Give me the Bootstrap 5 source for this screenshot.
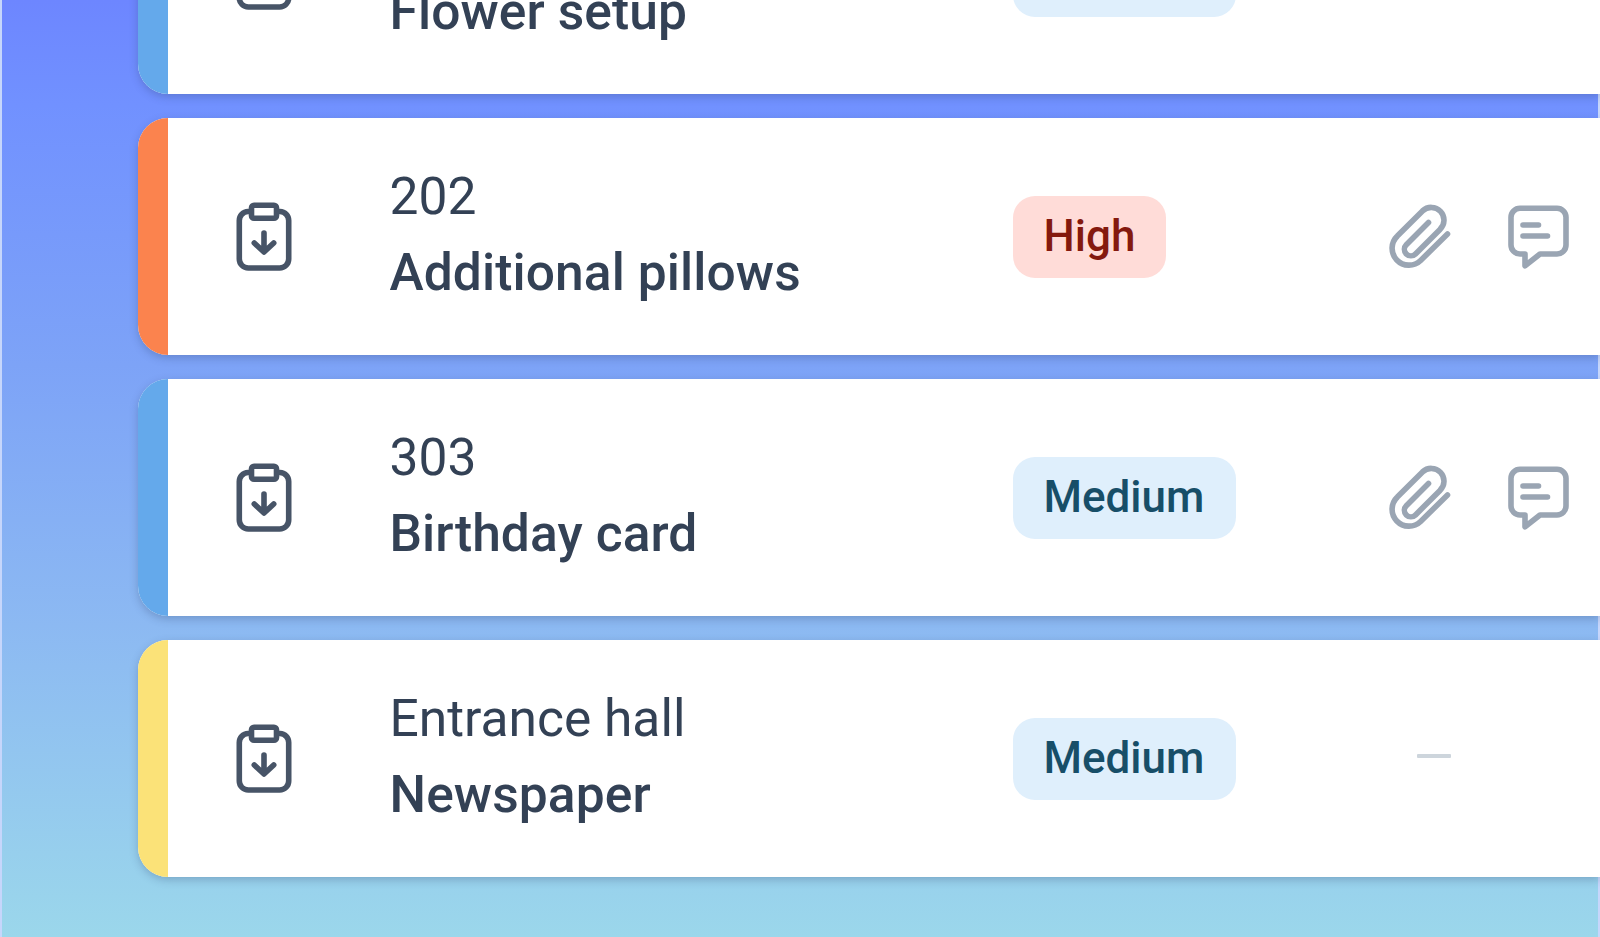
<!DOCTYPE html>
<html lang="en">
<head>
<meta charset="utf-8">
<meta name="viewport" content="width=device-width, initial-scale=1">
<title>Tasks</title>
<link href="https://cdn.jsdelivr.net/npm/bootstrap@5.3.0/dist/css/bootstrap.min.css" rel="stylesheet">
<style>
body { font-family: Roboto, "Liberation Sans", sans-serif; color: #334155; height: 937px; overflow: hidden; background: #fff; }
.board { display: flow-root; height: 937px; border: solid #c6d6fb; border-width: 0 2px; background: linear-gradient(180deg, #6d86ff 0, #7191ff 105px, #7da3f7 365px, #8cb9f2 625px, #9bd7eb 937px); padding-left: 135.5px; }
.stack { gap: 24px; margin-top: -143px; margin-right: -2px; }
.task { flex: none; height: 237px; border: 0; border-radius: 30px 0 0 30px; box-shadow: 0 3px 8px rgba(40,60,100,.27); background: #fff; }
.stripe { width: 30px; border-radius: 30px 0 0 30px; flex: none; }
.kind { width: 60px; height: 72px; margin-left: 66px; flex: none; color: #475467; }
.info { width: 623px; margin-left: 96px; font-size: 51.5px; line-height: 76px; white-space: nowrap; flex: none; padding-bottom: 3px; }
.place { min-height: 76px; }
.name { font-weight: 500; letter-spacing: .1px; }
.prio-cell { width: 376px; flex: none; }
.prio { font-size: 44px; font-weight: 500; line-height: 80px; height: 82px; min-width: 153px; padding: 0 31px; border-radius: 22px; display: inline-block; vertical-align: top; }
.prio-high { background: #ffdcd8; color: #84190e; }
.prio-medium { min-width: 223px; background: #dfeffc; color: #174e68; }
.extra { color: #9aa5b3; gap: 54px; margin-left: .7px; }
.none { width: 34px; height: 4px; margin: -5px 0 0 28px; background: #cdd5dc; border-radius: 1px; }
.blue { background: #64a9eb; } .orange { background: #fb834e; } .yellow { background: #fbe278; }
svg { fill: none; stroke: currentColor; stroke-width: 5.6; stroke-linecap: round; stroke-linejoin: round; display: block; }
</style>
</head>
<body>
<svg width="0" height="0" class="position-absolute">
  <symbol id="clip" viewBox="0 0 60 72">
    <path d="M14.5 10.5H14A9 9 0 0 0 5.300 19.500V58A9 9 0 0 0 14.300 67H45.700A9 9 0 0 0 54.700 58V19.500A9 9 0 0 0 46 10.500H45.500"/>
    <rect x="17.500" y="4.300" width="25" height="13" rx="2.500"/>
    <path d="M30 32V50M20.300 42L30 51L39.700 42"/>
  </symbol>
  <symbol id="attach" viewBox="0 0 64 68">
    <path d="M39.500 19.500L17.300 41.700A6.500 6.500 0 0 0 26.500 50.900L51 26.400A12.400 12.400 0 0 0 33.500 7.900L8.300 33.100A16.500 16.500 0 0 0 31.600 57.500L58.500 31"/>
  </symbol>
  <symbol id="note" viewBox="0 0 64 68">
    <path d="M13 5.300H50A9 9 0 0 1 59 14.300V42A9 9 0 0 1 50 51H33L18 62.800V51H13A9 9 0 0 1 4 42V14.300A9 9 0 0 1 13 5.300Z"/>
    <path d="M16 22H31.500M16 33H40.500"/>
  </symbol>
</svg>
<main class="board">
  <div class="stack d-flex flex-column">
    <article class="card task flex-row align-items-center">
      <div class="stripe blue align-self-stretch"></div>
      <svg class="kind"><use href="#clip"/></svg>
      <div class="info"><div class="place"></div><div class="name">Flower setup</div></div>
      <div class="prio-cell"><span class="prio prio-medium"></span></div>
    </article>
    <article class="card task flex-row align-items-center">
      <div class="stripe orange align-self-stretch"></div>
      <svg class="kind"><use href="#clip"/></svg>
      <div class="info"><div class="place">202</div><div class="name">Additional pillows</div></div>
      <div class="prio-cell"><span class="prio prio-high">High</span></div>
      <div class="extra d-flex"><svg width="64" height="68"><use href="#attach"/></svg><svg width="64" height="68"><use href="#note"/></svg></div>
    </article>
    <article class="card task flex-row align-items-center">
      <div class="stripe blue align-self-stretch"></div>
      <svg class="kind"><use href="#clip"/></svg>
      <div class="info"><div class="place">303</div><div class="name">Birthday card</div></div>
      <div class="prio-cell"><span class="prio prio-medium">Medium</span></div>
      <div class="extra d-flex"><svg width="64" height="68"><use href="#attach"/></svg><svg width="64" height="68"><use href="#note"/></svg></div>
    </article>
    <article class="card task flex-row align-items-center">
      <div class="stripe yellow align-self-stretch"></div>
      <svg class="kind"><use href="#clip"/></svg>
      <div class="info"><div class="place">Entrance hall</div><div class="name">Newspaper</div></div>
      <div class="prio-cell"><span class="prio prio-medium">Medium</span></div>
      <div class="none"></div>
    </article>
  </div>
</main>
<script src="https://cdn.jsdelivr.net/npm/bootstrap@5.3.0/dist/js/bootstrap.bundle.min.js"></script>
</body>
</html>
